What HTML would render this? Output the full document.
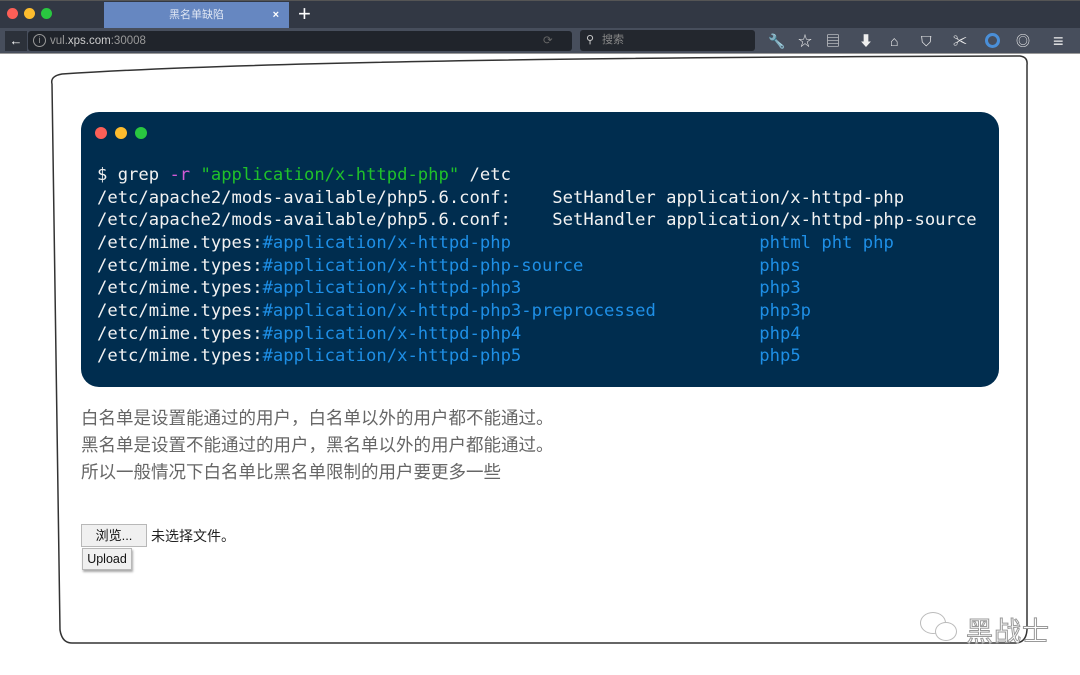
<!DOCTYPE html>
<html><head><meta charset="utf-8"><style>
*{margin:0;padding:0;box-sizing:border-box}
body{width:1080px;height:675px;background:#fff;position:relative;overflow:hidden;font-family:"Liberation Sans","Noto Sans CJK SC",sans-serif}
.tabbar{position:absolute;left:0;top:0;width:1080px;height:28px;background:#323844;border-top:1px solid #555}
.dot{position:absolute;top:7px;width:11px;height:11px;border-radius:50%}
.tab{position:absolute;left:104px;top:1px;width:185px;height:26px;background:#6687c1;color:#dfe6f3;font-size:11px;text-align:center;line-height:26px}
.nav{position:absolute;left:0;top:28px;width:1080px;height:26px;background:#474e5c;border-bottom:1px solid #999}
.url{position:absolute;left:28px;top:3px;width:544px;height:20px;background:#20242b;border-radius:3px;color:#999;font-size:11.5px;line-height:20px;padding-left:22px}
.search{position:absolute;left:580px;top:2px;width:175px;height:21px;background:#23272e;border-radius:3px;color:#888;font-size:11px;line-height:21px;padding-left:22px}
.ic{position:absolute;top:5px;color:#eee;font-size:14px;line-height:16px}
.term{position:absolute;left:81px;top:112px;width:918px;height:275px;background:#002d4f;border-radius:18px}
.term .d{position:absolute;top:15px;width:12px;height:12px;border-radius:50%}
pre{position:absolute;left:16px;top:52px;font-family:"DejaVu Sans Mono",monospace;font-size:17.2px;line-height:22.65px;color:#f2f2f2}
.g{color:#1fc12a}.m{color:#d35ad6}.b{color:#1e8fe6}
.txt{position:absolute;left:81px;top:405px;color:#666;font-size:17.5px;line-height:27px}
.btn{position:absolute;background:#f0f0f0;border:1px solid #b8b8b8;font-size:13px;color:#111;text-align:center}
</style></head><body>
<div class="tabbar">
<div class="dot" style="left:7px;background:#fc5f57"></div>
<div class="dot" style="left:24px;background:#fdbc2e"></div>
<div class="dot" style="left:41px;background:#29c740"></div>
<div class="tab">黑名单缺陷<span style="position:absolute;right:10px;color:#fff;font-weight:bold">×</span></div>
<div style="position:absolute;left:298px;top:1px;color:#fff;font-size:22px;line-height:24px">+</div>
</div>
<div class="nav">
<div style="position:absolute;left:5px;top:3px;width:22px;height:20px;background:#2c313a;color:#fff;font-size:13px;text-align:center;line-height:20px;font-weight:bold">←</div>
<div class="url"><span style="position:absolute;left:5px;top:3px;width:13px;height:13px;border:1px solid #999;border-radius:50%;font-size:9px;line-height:11px;text-align:center">i</span>vul.<span style="color:#ccc">xps.com</span>:30008<span style="position:absolute;left:515px;color:#666">⟳</span></div>
<div class="search"><span style="position:absolute;left:6px;top:0;color:#ccc">⚲</span>搜索</div>
<span class="ic" style="left:768px">🔧</span>
<span class="ic" style="left:798px">☆</span>
<span class="ic" style="left:826px">▤</span>
<span class="ic" style="left:859px">⬇</span>
<span class="ic" style="left:890px">⌂</span>
<span class="ic" style="left:921px">⛉</span>
<span class="ic" style="left:953px">✂</span>
<span style="position:absolute;left:985px;top:5px;width:15px;height:15px;border:3px solid #4a8fd8;border-radius:50%"></span>
<span class="ic" style="left:1016px">◎</span>
<span class="ic" style="left:1053px;font-size:18px">≡</span>
</div>
<svg style="position:absolute;left:0;top:0" width="1080" height="675">
<path d="M52 84 Q50 76 62 74 Q300 58 1020 56 Q1028 57 1027 65 L1027 630 Q1026 643 1015 643 L72 643 Q62 643 60 630 Q56 400 52 84 Z" fill="none" stroke="#333" stroke-width="1.5"/>
</svg>
<div class="term">
<div class="d" style="left:14px;background:#fc5f57"></div>
<div class="d" style="left:34px;background:#fdbc2e"></div>
<div class="d" style="left:54px;background:#29c740"></div>
<pre>$ grep <span class="m">-r</span> <span class="g">"application/x-httpd-php"</span> /etc
/etc/apache2/mods-available/php5.6.conf:    SetHandler application/x-httpd-php
/etc/apache2/mods-available/php5.6.conf:    SetHandler application/x-httpd-php-source
/etc/mime.types:<span class="b">#application/x-httpd-php                        phtml pht php</span>
/etc/mime.types:<span class="b">#application/x-httpd-php-source                 phps</span>
/etc/mime.types:<span class="b">#application/x-httpd-php3                       php3</span>
/etc/mime.types:<span class="b">#application/x-httpd-php3-preprocessed          php3p</span>
/etc/mime.types:<span class="b">#application/x-httpd-php4                       php4</span>
/etc/mime.types:<span class="b">#application/x-httpd-php5                       php5</span></pre>
</div>
<div class="txt">白名单是设置能通过的用户，白名单以外的用户都不能通过。<br>黑名单是设置不能通过的用户，黑名单以外的用户都能通过。<br>所以一般情况下白名单比黑名单限制的用户要更多一些</div>
<div class="btn" style="left:81px;top:524px;width:66px;height:23px;line-height:21px">浏览...</div>
<div style="position:absolute;left:151px;top:526px;font-size:14px;color:#222">未选择文件。</div>
<div class="btn" style="left:82px;top:548px;width:50px;height:22px;line-height:20px;font-size:12.5px;box-shadow:1px 2px 2px #aaa">Upload</div>
<div style="position:absolute;left:966px;top:610px;font-size:27px;color:#fff;-webkit-text-stroke:1px #999;letter-spacing:1px">黑战士</div>
<div style="position:absolute;left:920px;top:612px;width:26px;height:22px;border:1px solid #bbb;border-radius:50%;background:#fff"></div>
<div style="position:absolute;left:935px;top:622px;width:22px;height:19px;border:1px solid #bbb;border-radius:50%;background:#fff"></div>
</body></html>
